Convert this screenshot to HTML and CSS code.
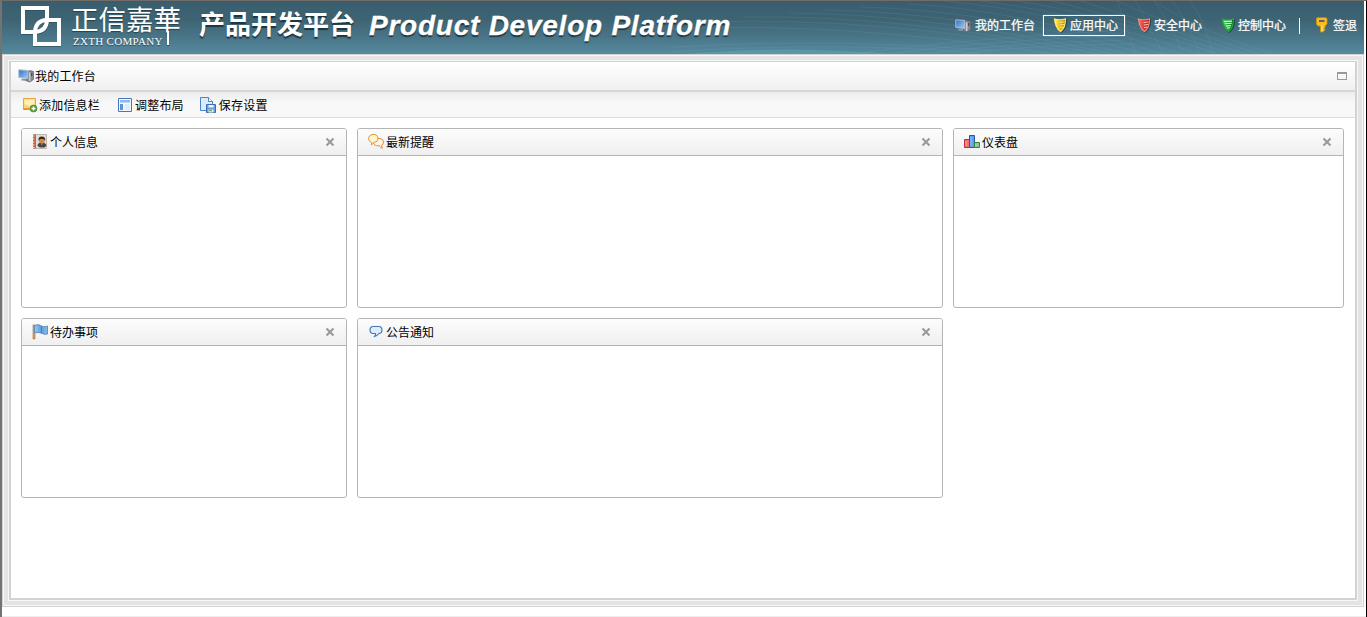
FILE: index.html
```html
<!DOCTYPE html>
<html lang="zh-CN">
<head>
<meta charset="utf-8">
<title>产品开发平台</title>
<link rel="stylesheet" href="styles.css">
</head>
<body>
<svg class="defs" aria-hidden="true">
  <defs>
    <linearGradient id="gold" x1="0" x2="1"><stop offset="0" stop-color="#fff26a"/><stop offset=".4" stop-color="#f2c41c"/><stop offset="1" stop-color="#b98200"/></linearGradient>
    <linearGradient id="red" x1="0" x2="1"><stop offset="0" stop-color="#ff6a5c"/><stop offset="1" stop-color="#b80d0d"/></linearGradient>
    <linearGradient id="green" x1="0" x2="1"><stop offset="0" stop-color="#3fd05a"/><stop offset="1" stop-color="#067a1c"/></linearGradient>
    <linearGradient id="screen" x1="0" y1="0" x2="1" y2="1"><stop offset="0" stop-color="#2f6cc0"/><stop offset="1" stop-color="#a4d0f8"/></linearGradient>
    <linearGradient id="flag" x1="0" x2="1"><stop offset="0" stop-color="#9ccaf2"/><stop offset=".5" stop-color="#5f9fdc"/><stop offset="1" stop-color="#86b8e8"/></linearGradient>
    <symbol id="computer" viewBox="0 0 16 16">
      <path d="M8.500 4l3.500-1.500 3.500 1v8l-3.500 2.500-3.500-1z" fill="#85898f" stroke="#5f636a" stroke-width=".7"/>
      <path d="M11.800 4.500v8.500" stroke="#e2e4e7" stroke-width="1.100"/>
      <path d="M13.700 5v3" stroke="#44474c" stroke-width="1.200"/>
      <path d="M.8 1.800l9 .6v8L.8 9.500z" fill="url(#screen)" stroke="#a9bdd6" stroke-width="1"/>
      <path d="M4 10.700l4 .4v1.900l-5-.8z" fill="#8797a9"/>
    </symbol>
    <symbol id="shield" viewBox="0 0 16 16">
      <path d="M3 2.500Q9 4 15 2.500Q15 9 13 12Q11.500 14.500 9.500 16Q5 13 3.500 8z" fill="#13272e" opacity=".6"/>
      <path d="M1.800 1.300Q8 3.200 14 1.300Q14 8.500 12 11.500Q10.500 14 8.500 15.200Q5 13 3.500 9Q2 5 1.800 1.300z" fill="currentColor"/>
    </symbol>
    <symbol id="close" viewBox="0 0 10 10"><path d="M1.500 1.500l7 7M8.500 1.500l-7 7" stroke="#999" stroke-width="2.100"/></symbol>
  </defs>
</svg>

<div class="window">
  <header class="banner">
    <svg class="rays" viewBox="0 0 760 53" preserveAspectRatio="none" aria-hidden="true">
      <g fill="none" stroke="#8ed0de" stroke-width=".7" opacity=".15">
        <path d="M0 28Q190 20 420 53M40 21Q230 15 450 53M80 16Q250 13 470 53M130 12Q290 13 485 53M170 9Q320 11 500 53M210 6Q350 9 520 53M260 3Q370 7 540 53M300 0Q410 8 560 53M340 0Q440 10 580 53M380 0Q470 12 600 53M420 0Q490 16 615 53M450 0Q520 20 630 53M490 0Q550 25 645 53M530 0Q580 30 660 53"/>
        <path d="M200 53Q320 38 480 30M240 53Q340 40 490 35M280 53Q370 42 500 39M320 53Q400 43 510 43M0 46Q180 36 360 50M0 51Q180 40 340 52M490 0Q500 25 510 53M510 0Q525 25 540 53M530 0Q550 25 562 53M550 0Q570 25 580 53M570 0Q590 28 594 53"/>
      </g>
      <path d="M15 53Q120 44 245 53z" fill="#65b6c2" opacity=".35"/>
    </svg>
    <svg class="mark" viewBox="0 0 42 42" aria-hidden="true">
      <g class="mark-shade" fill="none" stroke="#234755" stroke-width="4" transform="translate(0 1)"><path d="M15 27H3V3H27V15Q27 26 15 27M27 15H39V39H15V27Q15 15 27 15"/></g>
      <path d="M15 27H3V3H27V15Q26.500 26.500 15 27" fill="none" stroke="#fff" stroke-width="4"/>
      <path d="M27 15H39V39H15V27Q15.500 15.500 27 15" fill="none" stroke="#fff" stroke-width="4"/>
    </svg>
    <div class="company">
      <div class="company-cn">正信嘉華</div>
      <div class="company-en">ZXTH COMPANY</div>
      <i class="company-stem"></i>
    </div>
    <div class="product-cn">产品开发平台</div>
    <div class="product-en">Product Develop Platform</div>
    <nav class="nav">
      <a class="nav-item home"><svg class="icon"><use href="#computer"/></svg>我的工作台</a>
      <a class="nav-item active"><svg class="icon" viewBox="0 0 16 16"><use href="#shield" color="#ffe873"/><path d="M3 2.700Q8 4 13 2.700Q12.500 10.500 8.500 13.800Q4 10 3 2.700z" fill="url(#gold)"/><path d="M7.500 5.500l5-.6M7.800 8l4.300-.5M8 10.500l3-.4" stroke="#fff29a" stroke-width=".9"/></svg>应用中心</a>
      <a class="nav-item security"><svg class="icon" viewBox="0 0 16 16"><use href="#shield" color="#ef8d82"/><path d="M3 2.700Q8 4 13 2.700Q12.500 10.500 8.500 13.800Q4 10 3 2.700z" fill="url(#red)"/><path d="M7.500 5.500l5-.6M7.800 8l4.300-.5M8 10.500l3-.4" stroke="#ffc4bb" stroke-width="1"/></svg>安全中心</a>
      <a class="nav-item control"><svg class="icon" viewBox="0 0 16 16"><use href="#shield" color="#26a541"/><path d="M3 2.700Q8 4 13 2.700Q12.500 10.500 8.500 13.800Q4 10 3 2.700z" fill="url(#green)"/><path d="M4 4.500l8-.4M4.700 6.800l7-.5M5.800 9l5-.4M7 11l3-.3" stroke="#dcffdc" stroke-width="1.100"/></svg>控制中心</a>
      <span class="divider"></span>
      <a class="nav-item logout"><svg class="icon" viewBox="0 0 16 16"><path d="M3 .8h9l1 1v5l-2 2.200v1.500l-1 1 1 1-2 2.500H6.500V9H4L2.500 7V1.800z" fill="#f7bd22" stroke="#d99708" stroke-width=".8"/><path d="M5 3h5.500v2H5z" fill="#53676c"/><path d="M8 8v6" stroke="#ffe98a"/></svg>签退</a>
    </nav>
  </header>

  <div class="frame">
    <main class="workspace">
      <div class="titlebar">
        <svg class="icon"><use href="#computer"/></svg><span>我的工作台</span>
        <i class="maximize"></i>
      </div>
      <div class="toolbar">
        <a class="tool add"><svg class="icon" viewBox="0 0 16 16"><path d="M1.500 1.500h12v11h-12z" fill="#fbd576" stroke="#eaa63d"/><path d="M2.500 2.500h10V9q-4 1-10-2z" fill="#fff0b8"/><path d="M1.500 12h6" stroke="#e88a20" stroke-width="1.500"/><circle cx="11.500" cy="11.500" r="3.500" fill="#5c9e2e" stroke="#467f20" stroke-width=".6"/><path d="M9.500 11.500h4M11.500 9.500v4" stroke="#fff" stroke-width="1.400"/></svg><span>添加信息栏</span></a>
        <a class="tool layout"><svg class="icon" viewBox="0 0 16 16"><path d="M1.500 1.500h13v13h-13z" fill="#f2f8ff" stroke="#4377c0"/><path d="M3 3h10v2.500H3z" fill="#8eb9ec"/><path d="M3 7h3v6H3z" fill="#5c91d6"/><path d="M7.500 7H13v6H7.500z" fill="#deebfa"/></svg><span>调整布局</span></a>
        <a class="tool save"><svg class="icon" viewBox="0 0 16 16"><path d="M.5.500h8l4 4v9H.5z" fill="#dcebfb" stroke="#4b84c7"/><path d="M8.500.500v4h4" fill="#fff" stroke="#4b84c7"/><path d="M6.500 7.500h9v8h-9z" fill="#6f9cdd" stroke="#3d6eb5"/><path d="M8.500 8h5v2.500h-5z" fill="#eef6ff"/><path d="M8.500 12.500h5v3h-5z" fill="#eaf4d6"/><path d="M9 13.500h3" stroke="#71ad4d" stroke-width="1.500"/></svg><span>保存设置</span></a>
      </div>
      <div class="grid">
        <section class="portlet">
          <h2 class="portlet-head"><svg class="icon" viewBox="0 0 16 16"><path d="M1.500.500h13v14h-13z" fill="#e4ded9" stroke="#bdb4ae"/><path d="M1 .5h3v14H1z" fill="#ca6237"/><path d="M.5 2h2M.5 5h2M.5 8h2M.5 11h2M.5 13.500h2" stroke="#f5e6d9"/><path d="M5.500 12q0-3.500 4.200-3.500 4.600 0 4.600 3.500l-2 1.500H8z" fill="#444"/><circle cx="9.800" cy="6.500" r="3" fill="#c98952"/><path d="M6.500 6.500q-.5-4 3.300-4T13.200 6.500l-1.700-1.500H8.300z" fill="#3e2b20"/><path d="M9 9.500h1.600l-.8 2z" fill="#d8a16b"/></svg>个人信息<svg class="close"><use href="#close"/></svg></h2>
        </section>
        <section class="portlet">
          <h2 class="portlet-head"><svg class="icon" viewBox="0 0 16 16"><path d="M8 4.500h4q3.500.3 3.500 3.500 0 2.700-2 3.300l.7 3.200-3-2.700Q5.500 12 5.500 8.500 5.800 5 8 4.500z" fill="#fff6e8" stroke="#ee8a3c"/><path d="M4 .5h3q3 .5 3 4 0 3.700-4 4L3.300 11l.3-2.600Q.5 7.500.5 4.500T4 .5z" fill="#fff5cc" stroke="#ea9442"/></svg>最新提醒<svg class="close"><use href="#close"/></svg></h2>
        </section>
        <section class="portlet">
          <h2 class="portlet-head"><svg class="icon" viewBox="0 0 16 16"><path d="M.5 5.500h5v8h-5z" fill="#f07474" stroke="#c62b37"/><path d="M5.500 1.500h5v12h-5z" fill="#659fe8" stroke="#2855ac"/><path d="M10.500 8.500h5v5h-5z" fill="#8fc58e" stroke="#39833e"/><path d="M7 3v9M2 7v5M12 10v2" stroke="#fff" opacity=".35"/></svg>仪表盘<svg class="close"><use href="#close"/></svg></h2>
        </section>
        <section class="portlet">
          <h2 class="portlet-head"><svg class="icon" viewBox="0 0 16 16"><path d="M1 1h2v14H1z" fill="#d7a168" stroke="#a97139" stroke-width=".6"/><path d="M2.500 1.500Q6-.5 9 1.800q3 2 6.500.2v8q-3 1-6-.7-3-1.500-7-.5z" fill="url(#flag)" stroke="#4b82bd" stroke-width=".8"/><path d="M9.500 2.300v6.500" stroke="#467eb8"/></svg>待办事项<svg class="close"><use href="#close"/></svg></h2>
        </section>
        <section class="portlet">
          <h2 class="portlet-head"><svg class="icon" viewBox="0 0 16 16"><path d="M4.500 2.500h7q2.500.5 2.500 3.500 0 3-2.500 3.500H11Q9 12 6.500 12.500q1.200-1.500 1-3h-3Q2 9 2 6t2.500-3.500z" fill="#dfecfb" stroke="#437bbb" stroke-width="1.100"/></svg>公告通知<svg class="close"><use href="#close"/></svg></h2>
        </section>
      </div>
    </main>
  </div>
</div>
</body>
</html>
```

FILE: styles.css
```css
* { box-sizing: border-box; }
html, body { height: 100%; margin: 0; overflow: hidden; }
body {
  font: 12px/16px "Liberation Sans", "Noto Sans CJK SC", sans-serif;
  color: #000;
  background: #fff;
}
.defs { position: absolute; width: 0; height: 0; }
.icon { display: block; flex: none; width: 16px; height: 16px; }

.window {
  height: 617px;
  padding-right: 2px;
  border-top: 1px solid #716c68;
  border-left: 2px solid #737373;
  border-right: 1px solid #000;
  box-shadow: inset 0 -1px #eee;
}

/* Banner */
.banner {
  position: relative;
  display: flex;
  height: 53px;
  color: #fff;
  background: linear-gradient(#395d6c 0%, #3e6473 35%, #487386 65%, #568a9e 100%);
}
.banner > * { position: relative; flex: none; }
.banner > .rays { position: absolute; right: 0; top: 0; width: 694px; height: 53px; }
.mark { width: 42px; height: 42px; margin: 4px 0 0 18px; }
.mark-shade { opacity: .6; }
.company { width: 111px; margin: 2px 0 0 9px; text-shadow: 0 1px 1px #24414d; }
.company-cn { font: 400 27.500px/31px "Noto Sans CJK SC", sans-serif; white-space: nowrap; }
.company-en {
  margin: 1px 0 0 2px;
  font: 11px/12px "Liberation Serif", serif;
  letter-spacing: .3px;
  white-space: nowrap;
}
/* The last character's stem runs down past the company name */
.company-stem { position: absolute; left: 96px; top: 28px; width: 2px; height: 14px; background: #fff; box-shadow: 0 1px 1px #24414d; }
.product-cn {
  width: 170px;
  margin: 2px 0 0 17px;
  font: bold 26px/40px "Noto Sans CJK SC", sans-serif;
  text-shadow: 0 2px 1px #1d3540;
  white-space: nowrap;
}
.product-en {
  margin-top: 5px;
  font: italic bold 28px/40px "Liberation Sans", Arial, sans-serif;
  letter-spacing: .76px;
  text-shadow: 0 2px 1px #1d3540;
  -webkit-text-stroke: .3px #fff;
  white-space: nowrap;
}
.nav {
  display: flex;
  align-items: center;
  height: 21px;
  margin: 14px 7px 0 auto;
}
.nav-item { display: flex; align-items: center; height: 21px; gap: 2px; white-space: nowrap; -webkit-text-stroke: .25px #fff; }
.home { gap: 4px; margin-right: 8px; }
.active { padding: 0 6px 0 8px; border: 1px solid #fff; box-shadow: 0 0 1px #91b5ee; }
.nav-item:not(.home) .icon { position: relative; top: -1px; }
.security { margin-left: 11px; }
.control { margin-left: 18px; }
.divider { width: 1px; height: 16px; margin: 0 14px 0 13px; background: #fff; }
.logout { gap: 3px; }

/* Workspace */
.frame {
  height: 553px;
  padding: 6px;
  border: 1px solid #d2d2d2;
  background: #e4e4e4;
  box-shadow: inset 0 0 0 1px #f7f7f7;
}
.workspace {
  height: 539px;
  background: #fff;
  border: 2px solid #d2d2d2;
  border-top-width: 1px;
  outline: 1px solid #f7f7f7;
}
.titlebar {
  display: flex;
  align-items: center;
  height: 30px;
  padding: 0 8px 0 7px;
  gap: 1px;
  letter-spacing: .2px;
  border-bottom: 2px solid #d6d6d6;
  background: linear-gradient(#fff, #f0f0f0);
}
.titlebar span { padding-top: 2px; }
.maximize { width: 10px; height: 8px; margin-left: auto; border: 1px solid #999; border-top-width: 2px; }
.toolbar {
  display: flex;
  align-items: center;
  height: 26px;
  padding: 1px 0 0 11px;
  letter-spacing: .2px;
  border-bottom: 1px solid #dcdcdc;
  background: linear-gradient(#ececec, #f8f8f8 45%, #f8f8f8);
}
.tool { display: flex; align-items: center; gap: 2px; }
.tool span { margin: 1px 0 -1px; }
.layout { margin-left: 17px; }
.save { gap: 3px; margin-left: 16px; }
.add { gap: 1px; }
.grid {
  display: grid;
  grid-template-columns: 326px 586px 391px;
  grid-auto-rows: 180px;
  gap: 10px;
  padding: 10px;
}
.portlet { border: 1px solid #b5b5b5; border-radius: 3px; background: #fff; }
.portlet-head {
  display: flex;
  align-items: center;
  gap: 2px;
  height: 27px;
  margin: 0;
  padding: 1px 11px 0 10px;
  font: inherit;
  border-bottom: 1px solid #b5b5b5;
  border-radius: 2px 2px 0 0;
  background: linear-gradient(#fcfcfc, #efefef);
}
.portlet-head .icon { margin-top: -1px; }
.close { width: 10px; height: 10px; margin: -2px 0 0 auto; }
```
